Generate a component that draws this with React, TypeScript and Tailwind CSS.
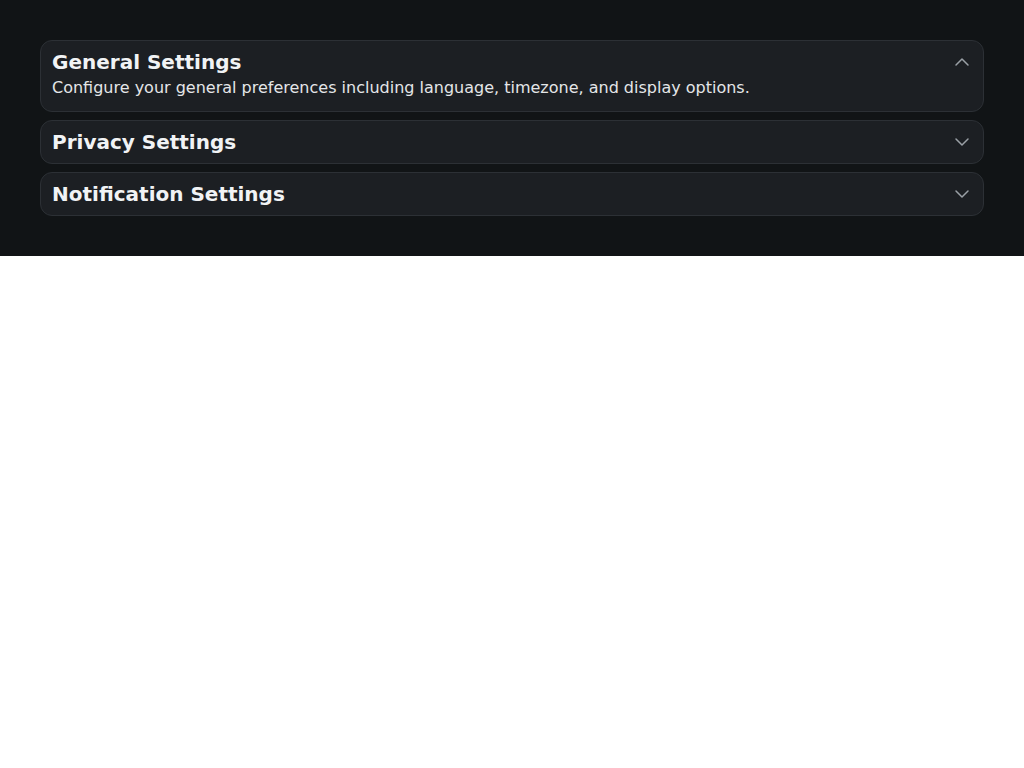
import React, { useState } from 'react';
import { ChevronDown, ChevronUp } from 'lucide-react';

interface Section {
  id: string;
  title: string;
  body: string;
}

const sections: Section[] = [
  {
    id: 'general',
    title: 'General Settings',
    body: 'Configure your general preferences including language, timezone, and display options.',
  },
  {
    id: 'privacy',
    title: 'Privacy Settings',
    body: 'Control who can see your profile, activity and personal information.',
  },
  {
    id: 'notifications',
    title: 'Notification Settings',
    body: 'Choose which alerts you receive by email, push and in-app messages.',
  },
];

export default function App() {
  const [open, setOpen] = useState<string | null>('general');

  return (
    <div className="bg-[#111416] p-10 font-['DejaVu_Sans',sans-serif]">
      <div className="flex flex-col gap-2">
        {sections.map((s) => {
          const isOpen = open === s.id;
          return (
            <div
              key={s.id}
              className="rounded-xl border border-[#2c3035] bg-[#1c1f23] px-[11px] py-[7px] text-[#f1f3f5]"
            >
              <button
                onClick={() => setOpen(isOpen ? null : s.id)}
                className="flex w-full items-center justify-between text-left"
              >
                <span className="text-xl leading-7 font-bold">{s.title}</span>
                {isOpen ? (
                  <ChevronUp className="-mr-[2px] h-6 w-6 text-[#9aa0a6]" strokeWidth={1.5} />
                ) : (
                  <ChevronDown className="-mr-[2px] h-6 w-6 text-[#9aa0a6]" strokeWidth={1.5} />
                )}
              </button>
              {isOpen && (
                <p className="pb-1 text-base leading-6 text-[#e4e6e8]">{s.body}</p>
              )}
            </div>
          );
        })}
      </div>
    </div>
  );
}
